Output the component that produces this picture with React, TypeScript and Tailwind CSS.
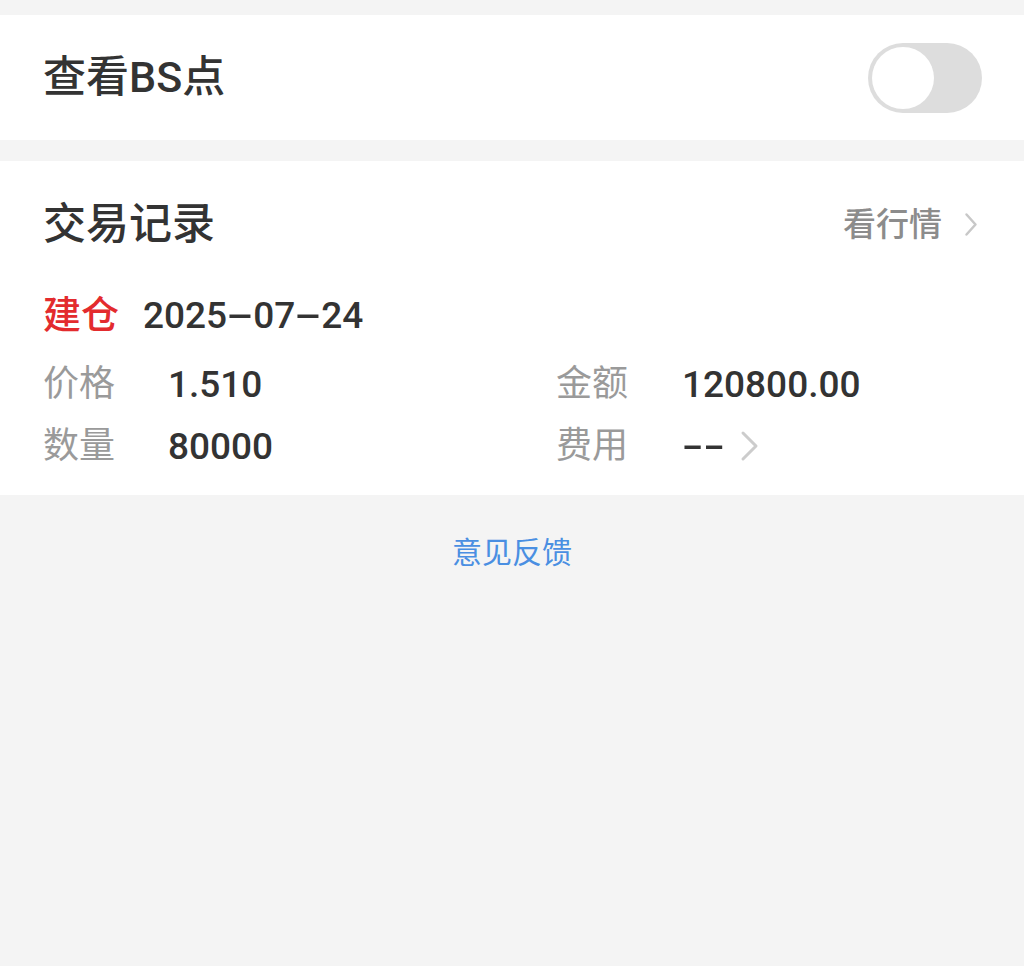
import React from "react";

const font = { fontFamily: 'Roboto, "Noto Sans CJK SC", sans-serif' };

function Chevron({ w, h, sw, color }: { w: number; h: number; sw: number; color: string }) {
  return (
    <svg width={w} height={h} viewBox={`0 0 ${w} ${h}`} fill="none">
      <polyline
        points={`${sw},${sw} ${w - sw},${h / 2} ${sw},${h - sw}`}
        stroke={color}
        strokeWidth={sw}
        strokeLinecap="round"
        strokeLinejoin="round"
      />
    </svg>
  );
}

function Dash() {
  return <span className="inline-block w-[26px] text-center scale-x-[2.2]">-</span>;
}

export default function App() {
  return (
    <div className="min-h-[966px] bg-[#f4f4f4] pt-[15px] text-[#333333]" style={font}>
      {/* Card 1 */}
      <div className="bg-white h-[125px] flex items-center justify-between pl-[43px] pr-[42px]">
        <span className="text-[43px] leading-none font-medium">查看BS点</span>
        <div className="w-[114px] h-[70px] rounded-full bg-[#dddddd] p-[4px] flex items-center">
          <div className="w-[62px] h-[62px] rounded-full bg-white" />
        </div>
      </div>

      {/* Card 2 */}
      <div className="bg-white mt-[21px] px-[43px] pb-[18px]">
        <div className="h-[126px] flex items-center justify-between">
          <span className="text-[43px] leading-none font-medium">交易记录</span>
          <div className="flex items-center gap-[22px] pr-[3px]">
            <span className="text-[33px] leading-none font-medium text-[#8c8c8c]">看行情</span>
            <Chevron w={14} h={25} sw={2.5} color="#c8c8c8" />
          </div>
        </div>
        <div className="h-[56px] flex items-center text-[38px] leading-none font-medium">
          <span className="text-[#e32b2e]">建仓</span>
          <span className="ml-[24px] text-[37px] whitespace-nowrap">
            2025<Dash />07<Dash />24
          </span>
        </div>
        <div className="grid grid-cols-[513px_1fr] mt-[10px]">
          <div className="h-[62px] flex items-center">
            <span className="w-[125px] text-[36px] leading-none text-[#9a9a9a]">价格</span>
            <span className="text-[37px] leading-none font-medium">1.510</span>
          </div>
          <div className="h-[62px] flex items-center">
            <span className="w-[126px] text-[36px] leading-none text-[#9a9a9a]">金额</span>
            <span className="text-[37px] leading-none font-medium">120800.00</span>
          </div>
          <div className="h-[62px] flex items-center">
            <span className="w-[125px] text-[36px] leading-none text-[#9a9a9a]">数量</span>
            <span className="text-[37px] leading-none font-medium">80000</span>
          </div>
          <div className="h-[62px] flex items-center">
            <span className="w-[126px] text-[36px] leading-none text-[#9a9a9a]">费用</span>
            <span className="w-[20px] inline-block text-[37px] leading-none font-medium whitespace-nowrap">
              <span className="inline-block origin-left scale-x-[1.7] whitespace-nowrap">--</span>
            </span>
            <span className="ml-[38px] flex items-center">
              <Chevron w={19} h={32} sw={3} color="#cccccc" />
            </span>
          </div>
        </div>
      </div>

      <div className="mt-[37px] h-[42px] flex items-center justify-center text-[30px] leading-none text-[#4a8fe2]">
        意见反馈
      </div>
    </div>
  );
}
